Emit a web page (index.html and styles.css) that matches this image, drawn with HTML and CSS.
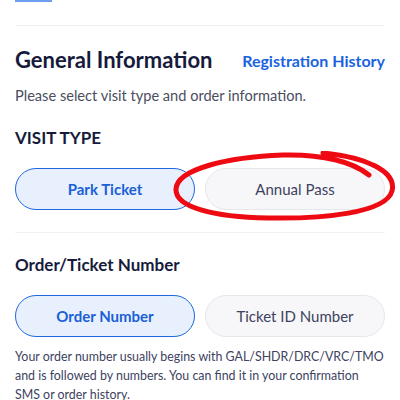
FILE: index.html
```html
<!DOCTYPE html>
<html>
<head>
<meta charset="utf-8">
<link rel="stylesheet" href="styles.css">
</head>
<body>
<div class="page">
  <div class="top-clip"><span class="top-link"></span></div>
  <div class="divider first"></div>
  <div class="head-row">
    <h1 class="title">General Information</h1>
    <a class="history" href="#">Registration History</a>
  </div>
  <p class="intro">Please select visit type and order information.</p>
  <h2 class="label visit">VISIT TYPE</h2>
  <div class="choices">
    <button class="choice active">Park Ticket</button>
    <button class="choice annual">Annual Pass
      <svg class="circle" width="226" height="72" viewBox="0 0 226 72">
        <path d="M150 2 C 192 6, 224 20, 219 40 C 213 62, 150 68, 95 67 C 40 66, 2 56, 3 38 C 4 18, 55 6, 110 4 C 150 3, 180 11, 196 24" fill="none" stroke="#ee0a12" stroke-width="5" stroke-linecap="round"/>
      </svg>
    </button>
  </div>
  <div class="divider second"></div>
  <h2 class="label order">Order/Ticket Number</h2>
  <div class="choices">
    <button class="choice active">Order Number</button>
    <button class="choice">Ticket ID Number</button>
  </div>
  <p class="note">Your order number usually begins with GAL/SHDR/DRC/VRC/TMO and is followed by numbers. You can find it in your confirmation SMS or order history.</p>
</div>
</body>
</html>
```
FILE: styles.css
```css
* { box-sizing: border-box; }
html, body { margin: 0; padding: 0; background: #fff; }
body {
  font-family: Lato, "Noto Sans", sans-serif;
  color: #1b2140;
  width: 400px;
  height: 400px;
  overflow: hidden;
}
.page { padding: 0 15px; }
.top-clip { height: 3px; overflow: hidden; }
.top-link {
  display: block;
  width: 37px;
  height: 2px;
  background: #6f9ef0;
}
.divider { height: 1px; background: #f0f1f4; }
.divider.first { margin-top: 22px; }
.head-row {
  display: flex;
  justify-content: space-between;
  align-items: center;
  margin-top: 21px;
  height: 26px;
}
.title {
  margin: 0;
  font-size: 22px;
  font-weight: 700;
  color: #161b3c;
  line-height: 26px;
}
.history {
  color: #1a63e0;
  font-size: 16px;
  font-weight: 700;
  text-decoration: none;
}
.intro {
  margin: 14px 0 0;
  font-size: 14.6px;
  line-height: 18px;
  color: #4a4e60;
}
.label {
  margin: 0;
  font-size: 17px;
  font-weight: 700;
  color: #161b3c;
  line-height: 22px;
}
.label.visit { margin-top: 22px; }
.label.order { margin-top: 21px; }
.choices {
  display: grid;
  grid-template-columns: 1fr 1fr;
  gap: 10px;
  margin-top: 19px;
}
.choice {
  position: relative;
  height: 42px;
  border-radius: 21px;
  border: 1px solid #e6e7ec;
  background: #f7f7f9;
  font-family: Lato, "Noto Sans", sans-serif;
  font-size: 15px;
  color: #3d4260;
  padding: 0;
}
.choice.active {
  background: #e8f0fd;
  border: 1px solid #1e68e0;
  color: #1a5fd6;
  font-weight: 700;
}
.circle {
  position: absolute;
  left: -33px;
  top: -18px;
  pointer-events: none;
}
.divider.second { margin-top: 22px; }
.note {
  margin: 10px 0 0;
  font-size: 12.4px;
  line-height: 19px;
  color: #3d4260;
}
```
